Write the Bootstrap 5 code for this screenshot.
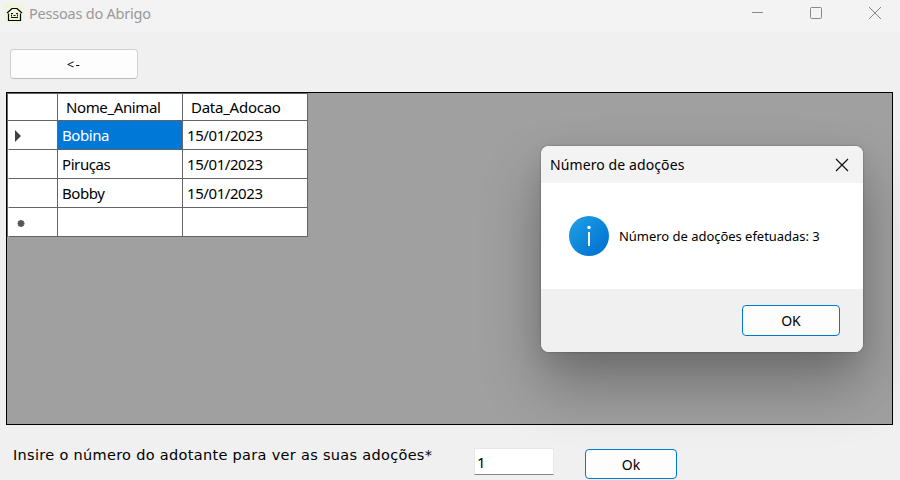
<!DOCTYPE html>
<html lang="pt">
<head>
<meta charset="utf-8">
<meta name="viewport" content="width=device-width, initial-scale=1">
<title>Pessoas do Abrigo</title>
<link href="https://cdn.jsdelivr.net/npm/bootstrap@5.3.0/dist/css/bootstrap.min.css" rel="stylesheet">
<style>
body{width:900px;height:480px;background:#f0f0f0;color:#000;font-family:"Noto Sans","Open Sans",sans-serif;font-size:14px;line-height:20px;white-space:nowrap}
.title-bar{height:32px;background:#f3f3f3;color:#999;padding:0 19px 6px 4px}
.app-icon{margin-right:5px}
.caption{font-size:14.5px;letter-spacing:-.22px;margin-bottom:1px}
.win-controls{gap:47px}
.back-row{padding:17px 10px 13px}
.btn.btn-win{--bs-btn-bg:#fdfdfd;--bs-btn-color:#000;--bs-btn-border-color:#d0d0d0;--bs-btn-border-radius:4px;--bs-btn-padding-y:0;--bs-btn-padding-x:0;--bs-btn-font-size:14px;--bs-btn-hover-bg:#e5f1fb;--bs-btn-hover-color:#000}
.btn.btn-accent{--bs-btn-border-color:#0078d4}
.btn.btn-back{width:128px;height:30px;font-size:13px;letter-spacing:1.5px;padding-top:2px;border-bottom-color:#bbb}
.data-grid{margin:0 7px 0 6px;height:333px;border:1px solid #000;background:#a0a0a0}
.grid-table{width:300px;height:144px;table-layout:fixed;border-collapse:separate;border-spacing:0;border-top:1px solid #646464;border-left:1px solid #646464;background:#fff;font-size:15px;line-height:20px}
.grid-table th,.grid-table td{border-right:1px solid #646464;border-bottom:1px solid #646464;font-weight:400;padding:0 0 0 4px;height:29px;vertical-align:middle;letter-spacing:-.42px}
.grid-table thead th{height:27px;padding-left:8px;letter-spacing:-.38px}
.grid-table thead th:last-child{letter-spacing:-.25px}
.grid-table tbody th,.grid-table thead th:first-child{padding-left:5px}
.grid-table tbody th{border-left:1px solid #fff}
.grid-table svg{display:block;margin-top:2px}
.grid-table .picked{background:#0078d7;color:#fff}
.ask-row{padding:23px 12px 0 13px}
.ask-label{width:461px;font-family:"DejaVu Sans",Verdana,sans-serif;font-size:14.5px;letter-spacing:.31px;line-height:20px;padding-top:20px;margin-top:-23px;height:40px}
.form-control.num-box{width:80px;height:27px;border:1px solid #e8e8e8;border-bottom-color:#868686;border-radius:0;padding:0 2px;font-size:15px;color:#000;line-height:25px;background:#fff}
.btn.btn-ask{width:92px;height:30px;margin-left:31px;margin-top:1px}
.msg-box{position:absolute;left:541px;top:146px;width:322px;height:206px;border-radius:8px;background:#fff;box-shadow:0 0 2px rgba(0,0,0,.4),0 32px 60px rgba(0,0,0,.3),0 8px 24px rgba(0,0,0,.08)}
.msg-head{height:37px;background:#f3f3f3;border-radius:8px 8px 0 0;padding:0 14px 0 9px}
.msg-title{letter-spacing:.1px}
.msg-body{height:106px;padding:0 28px;gap:10px}
.msg-text{font-size:13px;letter-spacing:-.03px}
.msg-foot{height:63px;background:#f0f0f0;border-radius:0 0 8px 8px;padding-right:23px}
.btn.btn-msg{width:98px;height:31px}
</style>
</head>
<body class="position-relative overflow-hidden">
<header class="title-bar d-flex align-items-center justify-content-between">
  <div class="d-flex align-items-center">
    <svg class="app-icon" width="20" height="20" viewBox="0 0 20 20"><path fill="#f0f5dd" d="M0 0h20v20H0z"/><path d="M3 10 8 5.500H13L18 10M4.500 10.500V17.500H16.500V10.500" fill="none" stroke="#000" stroke-width="1.200"/><path d="M7 10.500h2m3 0h2M9.500 12.500h2M7 14.500h7M7.500 11.500v2M13.500 11.500v2" fill="none" stroke="#111"/></svg>
    <span class="caption">Pessoas do Abrigo</span>
  </div>
  <div class="win-controls d-flex align-items-center" aria-hidden="true">
    <svg width="12" height="12"><path d="M1 5.500h12" stroke="#888"/></svg>
    <svg width="12" height="12"><rect x=".5" y=".5" width="11" height="11" rx="1" fill="none" stroke="#888"/></svg>
    <svg width="12" height="12"><path d="M0 0 12 12M12 0 0 12" stroke="#888"/></svg>
  </div>
</header>
<main>
  <div class="back-row d-flex"><button class="btn btn-win btn-back">&lt;-</button></div>
  <div class="data-grid">
    <table class="grid-table">
      <colgroup><col style="width:50px"><col style="width:125px"><col style="width:125px"></colgroup>
      <thead><tr><th></th><th>Nome_Animal</th><th>Data_Adocao</th></tr></thead>
      <tbody>
        <tr><th><svg width="10" height="12"><path d="M1 0V12L7 6Z" fill="#404040"/></svg></th><td class="picked">Bobina</td><td>15/01/2023</td></tr>
        <tr><th></th><td>Piruças</td><td>15/01/2023</td></tr>
        <tr><th></th><td>Bobby</td><td>15/01/2023</td></tr>
        <tr><th><svg width="14" height="10"><path d="M7 2v7M3.500 5.500h7M4.500 3l5 5M9.500 3l-5 5" stroke="#555" stroke-width="1.800"/></svg></th><td></td><td></td></tr>
      </tbody>
    </table>
  </div>
  <div class="ask-row d-flex align-items-start">
    <label class="ask-label" for="num">Insire o número do adotante para ver as suas adoções*</label>
    <input class="form-control num-box" id="num" value="1">
    <button class="btn btn-win btn-accent btn-ask">Ok</button>
  </div>
</main>
<section class="msg-box d-flex flex-column" role="dialog">
  <div class="msg-head d-flex align-items-center justify-content-between">
    <span class="msg-title">Número de adoções</span>
    <svg width="14" height="14"><path d="M1 1 13 13M13 1 1 13" stroke="#111" stroke-width="1.200"/></svg>
  </div>
  <div class="msg-body d-flex align-items-center">
    <svg width="40" height="40"><defs><linearGradient id="blue" x1="0" y1="0" x2="1" y2="1"><stop offset=".1" stop-color="#1d9de3"/><stop offset=".9" stop-color="#0072d2"/></linearGradient></defs><circle cx="20" cy="20" r="20" fill="url(#blue)"/><circle cx="20" cy="11.500" r="1.700" fill="#fff"/><path d="M20 16v14" stroke="#fff" stroke-width="2"/></svg>
    <span class="msg-text">Número de adoções efetuadas: 3</span>
  </div>
  <div class="msg-foot d-flex align-items-center justify-content-end"><button class="btn btn-win btn-accent btn-msg">OK</button></div>
</section>
<script src="https://cdn.jsdelivr.net/npm/bootstrap@5.3.0/dist/js/bootstrap.bundle.min.js"></script>
</body>
</html>
